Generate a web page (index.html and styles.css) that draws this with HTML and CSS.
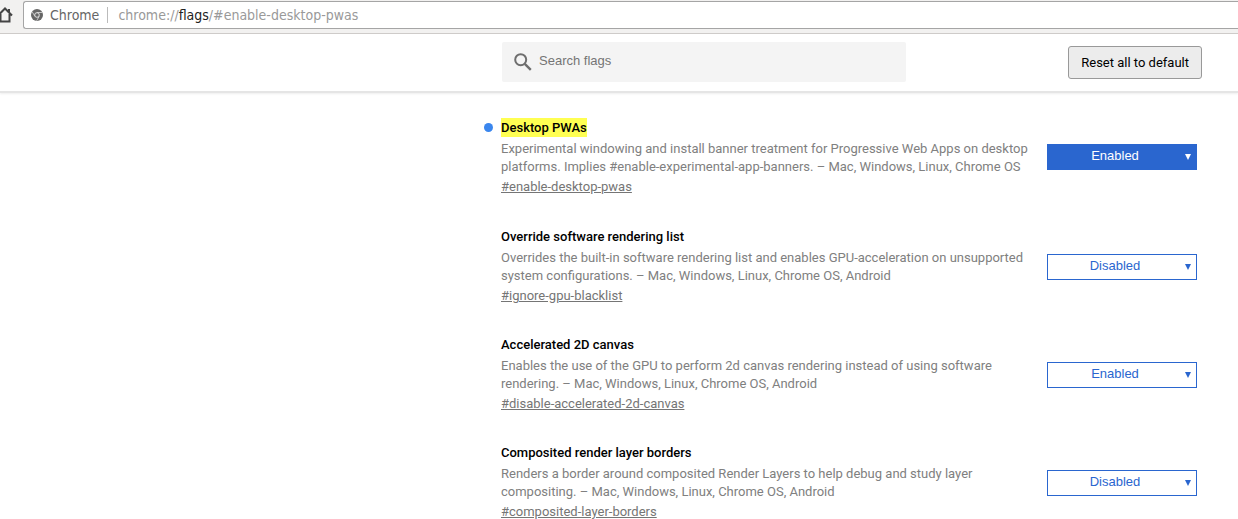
FILE: index.html
```html
<!DOCTYPE html>
<html lang="en">
<head>
<meta charset="utf-8">
<title>chrome://flags</title>
<link rel="stylesheet" href="styles.css">
</head>
<body>
<div class="toolbar">
  <button class="home" type="button" aria-label="Home">
    <svg width="16" height="18" viewBox="0 0 16 18" fill="none" stroke="#444" stroke-width="2"><path d="M1 9.5 8 2.5l7 7M3.5 8v7.5h9V8M12 3v4"/></svg>
  </button>
  <div class="omnibox">
    <svg class="chrome-icon" width="12" height="12" viewBox="0 0 12 12"><circle cx="6" cy="6" r="6" fill="#666"/><circle cx="6" cy="6" r="2.3" fill="#666" stroke="#eee" stroke-width=".9"/><path d="M6 3.5h5.4M3.9 7.3 1.2 2.8M8.2 7.3 5.6 11.8" stroke="#ddd" stroke-width=".8"/></svg>
    <span class="origin">Chrome</span>
    <span class="url">chrome://<span class="host">flags</span>/#enable-desktop-pwas</span>
  </div>
</div>
<header class="header">
  <label class="search">
    <svg width="18" height="18" viewBox="0 0 18 18" fill="none" stroke="#6e6e6e" stroke-width="2"><circle cx="6.7" cy="6.7" r="5.5"/><path d="m10.8 10.8 6 6" stroke-width="2.4"/></svg>
    <input class="search-input" type="text" placeholder="Search flags" aria-label="Search flags">
  </label>
  <button class="reset" type="button">Reset all to default</button>
</header>
<main class="flags">
  <section class="flag changed">
    <div class="info">
      <h2 class="name"><mark class="match">Desktop PWAs</mark></h2>
      <p class="description">Experimental windowing and install banner treatment for Progressive Web Apps on desktop platforms. Implies #enable-experimental-app-banners. – Mac, Windows, Linux, Chrome OS</p>
      <a class="permalink" href="#enable-desktop-pwas">#enable-desktop-pwas</a>
    </div>
    <div class="picker"><select class="choice" aria-label="Desktop PWAs"><option>Default</option><option selected>Enabled</option><option>Disabled</option></select></div>
  </section>
  <section class="flag">
    <div class="info">
      <h2 class="name">Override software rendering list</h2>
      <p class="description">Overrides the built-in software rendering list and enables GPU-acceleration on unsupported system configurations. – Mac, Windows, Linux, Chrome OS, Android</p>
      <a class="permalink" href="#ignore-gpu-blacklist">#ignore-gpu-blacklist</a>
    </div>
    <div class="picker"><select class="choice" aria-label="Override software rendering list"><option>Enabled</option><option selected>Disabled</option></select></div>
  </section>
  <section class="flag">
    <div class="info">
      <h2 class="name">Accelerated 2D canvas</h2>
      <p class="description">Enables the use of the GPU to perform 2d canvas rendering instead of using software rendering. – Mac, Windows, Linux, Chrome OS, Android</p>
      <a class="permalink" href="#disable-accelerated-2d-canvas">#disable-accelerated-2d-canvas</a>
    </div>
    <div class="picker"><select class="choice" aria-label="Accelerated 2D canvas"><option selected>Enabled</option><option>Disabled</option></select></div>
  </section>
  <section class="flag">
    <div class="info">
      <h2 class="name">Composited render layer borders</h2>
      <p class="description">Renders a border around composited Render Layers to help debug and study layer compositing. – Mac, Windows, Linux, Chrome OS, Android</p>
      <a class="permalink" href="#composited-layer-borders">#composited-layer-borders</a>
    </div>
    <div class="picker"><select class="choice" aria-label="Composited render layer borders"><option>Enabled</option><option selected>Disabled</option></select></div>
  </section>
</main>
</body>
</html>
```
FILE: styles.css
```css
* { box-sizing: border-box; }

html { overflow: hidden; }

body {
  margin: 0;
  background: #fff;
  font: 13px/18px Roboto, sans-serif;
}

.toolbar {
  display: flex;
  gap: 10px;
  padding: 1px 0 4px;
  background: #f2f1f0;
  border-bottom: 1px solid #ccc9c6;
}

.home {
  display: flex;
  align-items: center;
  margin-left: -3px;
  padding: 0;
  border: 0;
  background: none;
}

.omnibox {
  flex: 1;
  display: flex;
  align-items: center;
  height: 28px;
  padding-left: 7px;
  background: #fff;
  border: 1px solid #a5a5a5;
  border-right: 0;
  border-radius: 3px 0 0 3px;
  font: 14px/16px "DejaVu Sans Condensed", "Noto Sans", sans-serif;
}

.origin {
  margin-left: 7px;
  padding-right: 8px;
  color: #666;
  border-right: 1px solid #bbb;
}

.url {
  margin-left: 10px;
  color: #999;
}

.host { color: #222; }

.header {
  display: flex;
  justify-content: space-between;
  align-items: flex-start;
  padding: 8px 36px 9px 502px;
  border-bottom: 2px solid #e5e5e5;
  box-shadow: 0 1px 2px #eee;
}

.search {
  display: flex;
  align-items: center;
  gap: 7px;
  flex: 0 1 404px;
  height: 40px;
  padding-left: 12px;
  background: #f4f4f4;
  border-radius: 2px;
}

.search-input {
  flex: 1;
  min-width: 0;
  padding: 0 0 2px;
  border: 0;
  background: none;
  font: 13px/18px "Liberation Sans", sans-serif;
}

.search-input::placeholder { color: #757575; }

.reset {
  height: 33px;
  margin-top: 4px;
  padding: 0 12px;
  background: #ececec;
  border: 1px solid #999;
  border-radius: 3px;
  color: #000;
  font: 13px/18px Roboto, sans-serif;
}

.flags {
  display: grid;
  gap: 31px;
  padding: 25px 41px 0 501px;
}

.flag {
  display: flex;
  gap: 18px;
}

.info {
  flex: 1;
  min-width: 0;
}

.name {
  position: relative;
  margin: 0 0 3px;
  color: #000;
  font-size: 13px;
  font-weight: 500;
  line-height: 18px;
}

.changed { padding-bottom: 1px; }

.changed .name::before {
  content: "";
  position: absolute;
  top: 5px;
  left: -17px;
  width: 9px;
  height: 9px;
  border-radius: 50%;
  background: #3a86ee;
}

.match {
  display: block;
  width: fit-content;
  padding-top: 1px;
  background: #ffff52;
  color: #000;
}

.description {
  margin: 0 0 2px;
  color: #808080;
}

.permalink {
  display: block;
  width: fit-content;
  color: #757575;
}

.picker {
  position: relative;
  align-self: flex-start;
  margin-top: 26px;
  color: #2a66cf;
}

.picker::after {
  content: "";
  position: absolute;
  top: 10px;
  right: 6px;
  width: 6px;
  height: 6px;
  background: currentColor;
  clip-path: polygon(0 0, 100% 0, 50% 100%);
  pointer-events: none;
}

.choice {
  display: block;
  width: 150px;
  height: 26px;
  padding: 0 14px 3px 0;
  appearance: none;
  background: #fff;
  border: 1px solid #2a66cf;
  border-radius: 0;
  color: #2a66cf;
  font: 13px/18px "Liberation Sans", sans-serif;
  text-align: center;
  text-align-last: center;
}

.changed .picker { color: #fff; }

.changed .choice {
  background: #2a66cf;
  color: #fff;
}
```
